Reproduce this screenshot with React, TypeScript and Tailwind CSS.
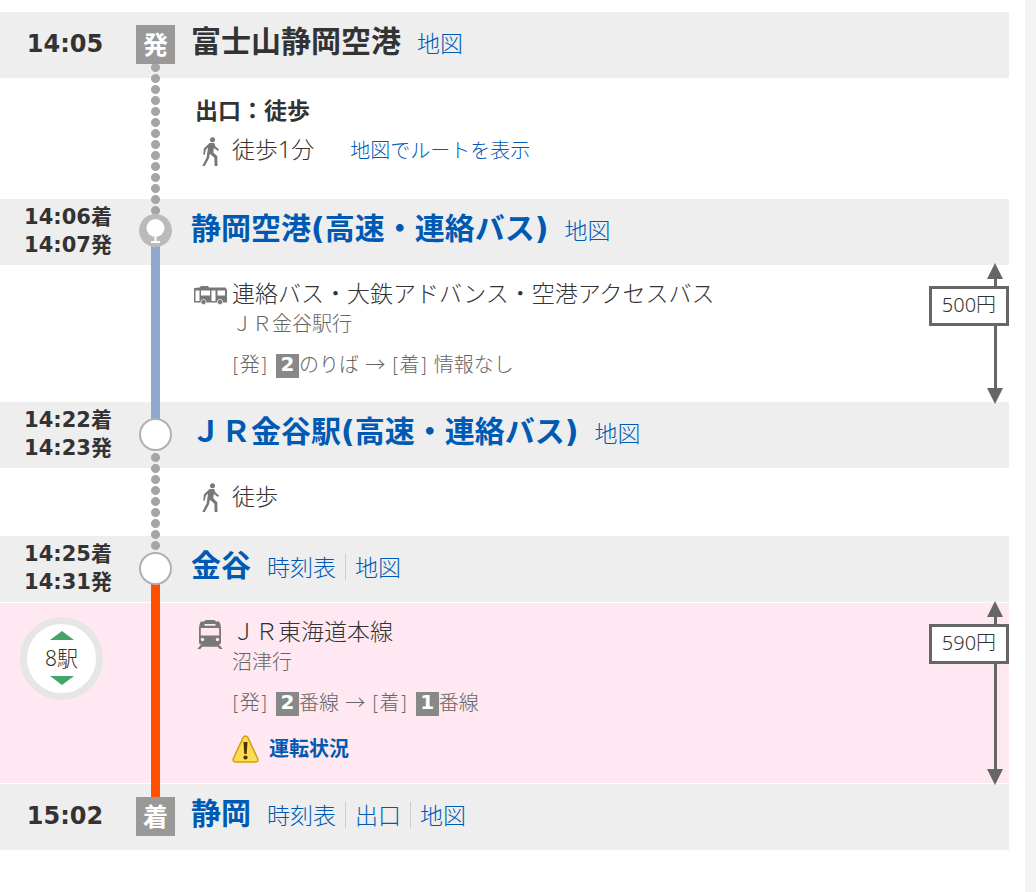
import React from "react";

type Leg = "walk" | "bus" | "train";

const railStyles: Record<Leg, string> = {
  walk: "bg-[radial-gradient(circle_at_center,#a5a5a5_4px,transparent_5px)] bg-[length:9px_11px] bg-[position:0_4px] bg-repeat-y",
  bus: "bg-[#91a8ce]",
  train: "bg-[#ff5000]",
};

/* ---------- Icons ---------- */

const WalkIcon: React.FC = () => (
  <svg width="18" height="30" viewBox="0 0 18 30" className="ml-2.5" aria-hidden="true">
    <circle cx="10.5" cy="2.8" r="2.5" fill="#787878" />
    <path
      d="M7.500 6h4.700l1.300 3.600 3.500 3-1 1.500-4.200-3-.5 4.300 4 3.800.2 9.800h-2.900l-.2-8.200-4.500-4-.9 4.400L2.800 29H.3l4.400-8.800 1.300-9.700-2.200 2.200-1 5.100-1.600-.4.700-6z"
      fill="#787878"
    />
  </svg>
);

const BusIcon: React.FC = () => (
  <svg width="33" height="19" viewBox="0 0 33 19" className="ml-0.5" aria-hidden="true">
    <path d="M5.500 1.500L7 0h7l1 1.500h16.500L33 4v12.500H0V2l5.500-.5z" fill="#787878" />
    <path d="M1.500 4.500h4v10.500h-4zM7 4.500h9v5H7zM17.500 4.500h4v10.500h-4zM23.500 4.500h7.500v5h-7.500z" fill="#fff" />
    <circle cx="9.500" cy="16" r="2.600" fill="#787878" stroke="#fff" strokeWidth=".7" />
    <circle cx="26" cy="16" r="2.600" fill="#787878" stroke="#fff" strokeWidth=".7" />
  </svg>
);

const TrainIcon: React.FC = () => (
  <svg width="26" height="30" viewBox="0 0 26 30" className="mt-1 ml-[5px]" aria-hidden="true">
    <path d="M8.500 0h9l1.500 1.500h3Q23.500 3 24 8v14.500q0 2-2 2H4q-2 0-2-2V8q.5-5 2-6.500h3z" fill="#787878" />
    <path d="M7.500 4h11v1.800h-11zM3.800 8h18.400v7.500H3.800z" fill="#ffe8f1" />
    <circle cx="5.500" cy="19.500" r="1.700" fill="#ffe8f1" />
    <circle cx="20.500" cy="19.500" r="1.700" fill="#ffe8f1" />
    <path d="M4.500 24h17l4.200 5h-3l-2-2.200H5.300L3.300 29h-3z" fill="#787878" />
  </svg>
);

const WarningIcon: React.FC = () => (
  <svg width="27" height="28" viewBox="0 0 27 28" aria-hidden="true">
    <path
      d="M11.300 2.200q2.200-2.600 4.400 0l10 21.600q.8 3-2 3.200H3.300q-2.800-.2-2-3.200z"
      fill="#ffdc50"
      stroke="#d0a010"
      strokeWidth="1.500"
    />
    <path d="M11.500 7h4l-.8 12h-2.400z" fill="#4a3500" />
    <circle cx="13.500" cy="22.500" r="2.100" fill="#4a3500" />
  </svg>
);

const BusStopIcon: React.FC = () => (
  <svg width="33" height="33" viewBox="0 0 33 33" className="relative z-20 -mt-px" aria-hidden="true">
    <circle cx="16.500" cy="16.500" r="16.500" fill="#bababa" />
    <circle cx="16.500" cy="14" r="9" fill="#fff" />
    <path d="M15.500 22h2v5h3.500v2h-9v-2h3.500z" fill="#fff" />
  </svg>
);

/* ---------- Building blocks ---------- */

const StationCircle: React.FC = () => (
  <div className="relative z-20 size-[33px] rounded-full border-2 border-[#b0b0b0] bg-white" />
);

const EndMark: React.FC<{ children: string }> = ({ children }) => (
  <div className="relative z-20 -mt-[3px] flex size-[39px] items-center justify-center bg-[#999] text-[25px] leading-none font-bold text-white">
    {children}
  </div>
);

interface StopProps {
  times: string[];
  mark: React.ReactNode;
  name: string;
  linked?: boolean;
  links: string[];
}

const Stop: React.FC<StopProps> = ({ times, mark, name, linked = true, links }) => (
  <li className="flex min-h-[66px] bg-[#eee]">
    <div className="w-[136px] shrink-0 text-center font-['DejaVu_Sans','Noto_Sans_CJK_JP',sans-serif] font-bold">
      {times.length === 1 ? (
        <p className="pt-4 pr-1.5 text-[24px] leading-8">{times[0]}</p>
      ) : (
        <div className="pt-1 text-[21px] leading-7">
          {times.map((time) => (
            <p key={time}>{time}</p>
          ))}
        </div>
      )}
    </div>
    <div className="flex w-[39px] shrink-0 justify-center pt-4">{mark}</div>
    <div className="flex items-baseline pt-2.5 pl-4">
      <h2 className="font-['DejaVu_Sans','Noto_Sans_CJK_JP',sans-serif] text-[30px] leading-10 font-bold">
        {linked ? (
          <a href="#station" className="text-[#005ab4]">
            {name}
          </a>
        ) : (
          name
        )}
      </h2>
      <ul className="ml-[7px] flex text-[23px] leading-[26px] font-light">
        {links.map((link, index) => (
          <li key={link} className={index > 0 ? "border-l border-[#ccc] px-[9px]" : "px-[9px]"}>
            <a href="#detail" className="text-[#005ab4]">
              {link}
            </a>
          </li>
        ))}
      </ul>
    </div>
  </li>
);

const Fare: React.FC<{ children: string }> = ({ children }) => (
  <div className="relative z-10 -my-0.5 ml-auto flex shrink-0 flex-col items-end">
    <svg width="16" height="16" viewBox="0 0 16 16" className="mr-1.5" aria-hidden="true">
      <path d="M8 0l8 16H0z" fill="#666" />
    </svg>
    <div className="mr-3 h-[7px] w-[3px] bg-[#666]" />
    <p className="flex h-10 w-20 items-center justify-center border-3 border-[#666] bg-white pb-0.5 text-[20px] leading-7">
      {children}
    </p>
    <div className="mr-3 w-[3px] grow bg-[#666]" />
    <svg width="16" height="16" viewBox="0 0 16 16" className="mr-1.5" aria-hidden="true">
      <path d="M0 0h16L8 16z" fill="#666" />
    </svg>
  </div>
);

interface SectionProps {
  kind: Leg;
  className: string;
  side?: React.ReactNode;
  fare?: string;
  children: React.ReactNode;
}

const Section: React.FC<SectionProps> = ({ kind, className, side, fare, children }) => (
  <li className={`flex font-light ${className}`}>
    <div className="w-[136px] shrink-0">{side}</div>
    <div className="-my-5 flex w-[39px] shrink-0 justify-center">
      <div className={`relative z-10 w-[9px] ${railStyles[kind]}`} />
    </div>
    <div className="pt-3.5 pl-[17px]">{children}</div>
    {fare && <Fare>{fare}</Fare>}
  </li>
);

const LineTitle: React.FC<{ icon: React.ReactNode; children: React.ReactNode }> = ({
  icon,
  children,
}) => (
  <div className="flex h-7 items-center text-[23px] leading-7">
    <div className="mt-1 w-10 shrink-0">{icon}</div>
    <p>{children}</p>
  </div>
);

const Platform: React.FC<{ children: string }> = ({ children }) => (
  <b className="mt-1 ml-0.5 inline-block h-6 w-[23px] bg-[#888] text-center align-top leading-5 font-bold text-white">
    {children}
  </b>
);

const Arrow: React.FC = () => <span className="font-['Noto_Sans_CJK_JP',sans-serif]">→</span>;

const PlatformLine: React.FC<{ children: React.ReactNode }> = ({ children }) => (
  <p className="mt-[9px] font-['DejaVu_Sans','Noto_Sans_CJK_JP',sans-serif] leading-7">{children}</p>
);

/* ---------- Page ---------- */

const App: React.FC = () => {
  return (
    <div className="min-h-screen bg-[#f4f4f4] pr-[11px] font-['Noto_Sans','Noto_Sans_CJK_JP',sans-serif] text-[#333]">
      <main className="min-h-screen bg-white pt-3 pr-4 pb-10" lang="ja">
        <ol>
          <Stop
            times={["14:05"]}
            mark={<EndMark>発</EndMark>}
            name="富士山静岡空港"
            linked={false}
            links={["地図"]}
          />
          <Section kind="walk" className="min-h-[121px]">
            <p className="mt-1 mb-3 ml-[3px] text-[23px] leading-7 font-bold">出口：徒歩</p>
            <LineTitle icon={<WalkIcon />}>
              徒歩1分
              <a href="#route" className="ml-9 text-[20px] text-[#005ab4]">
                地図でルートを表示
              </a>
            </LineTitle>
          </Section>

          <Stop
            times={["14:06着", "14:07発"]}
            mark={<BusStopIcon />}
            name="静岡空港(高速・連絡バス)"
            links={["地図"]}
          />
          <Section kind="bus" className="min-h-[137px]" fare="500円">
            <LineTitle icon={<BusIcon />}>連絡バス・大鉄アドバンス・空港アクセスバス</LineTitle>
            <div className="pl-10 text-[20px] text-[#666]">
              <p className="leading-[34px]">ＪＲ金谷駅行</p>
              <PlatformLine>
                [発] <Platform>2</Platform>のりば <Arrow /> [着] 情報なし
              </PlatformLine>
            </div>
          </Section>

          <Stop
            times={["14:22着", "14:23発"]}
            mark={<StationCircle />}
            name="ＪＲ金谷駅(高速・連絡バス)"
            links={["地図"]}
          />
          <Section kind="walk" className="min-h-[68px]">
            <LineTitle icon={<WalkIcon />}>徒歩</LineTitle>
          </Section>

          <Stop
            times={["14:25着", "14:31発"]}
            mark={<StationCircle />}
            name="金谷"
            links={["時刻表", "地図"]}
          />
          <Section
            kind="train"
            className="min-h-[182px] border-y border-white bg-[#ffe8f1]"
            fare="590円"
            side={
              <button
                type="button"
                className="mt-3.5 ml-5 flex size-[83px] flex-col items-center justify-center rounded-full border-7 border-[#e6e6e6] bg-white pb-0.5 text-[21px] leading-9"
              >
                <svg width="24" height="9" viewBox="0 0 24 9" aria-hidden="true">
                  <path d="M12 0l12 9H0z" fill="#45a566" />
                </svg>
                8駅
                <svg width="24" height="9" viewBox="0 0 24 9" aria-hidden="true">
                  <path d="M0 0h24L12 9z" fill="#45a566" />
                </svg>
              </button>
            }
          >
            <LineTitle icon={<TrainIcon />}>ＪＲ東海道本線</LineTitle>
            <div className="pl-10 text-[20px] text-[#666]">
              <p className="leading-[34px]">沼津行</p>
              <PlatformLine>
                [発] <Platform>2</Platform>番線 <Arrow /> [着] <Platform>1</Platform>番線
              </PlatformLine>
              <a
                href="#status"
                className="mt-4.5 flex items-center gap-2.5 leading-7 font-bold text-[#005ab4]"
              >
                <WarningIcon />
                運転状況
              </a>
            </div>
          </Section>

          <Stop
            times={["15:02"]}
            mark={<EndMark>着</EndMark>}
            name="静岡"
            links={["時刻表", "出口", "地図"]}
          />
        </ol>
      </main>
    </div>
  );
};

export default App;
